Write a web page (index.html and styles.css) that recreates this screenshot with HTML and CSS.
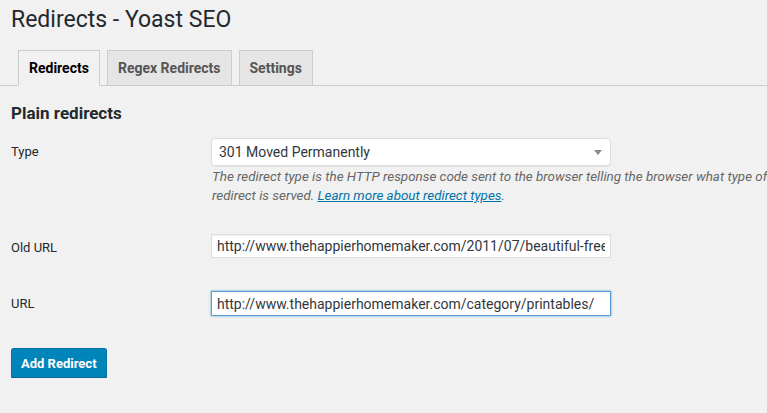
FILE: index.html
```html
<!DOCTYPE html>
<html lang="en">
<head>
  <meta charset="UTF-8" />
  <title>Redirects - Yoast SEO</title>
  <link rel="stylesheet" href="styles.css">
</head>
<body>
  <div class="wrap">
    <h1>Redirects - Yoast SEO</h1>

    <nav class="nav-tabs">
      <a class="nav-tab active" href="#">Redirects</a>
      <a class="nav-tab" href="#">Regex Redirects</a>
      <a class="nav-tab" href="#">Settings</a>
    </nav>

    <h2>Plain redirects</h2>

    <form class="form-table">
      <label class="row-label row-type" for="type">Type</label>
      <div class="field">
        <div class="select">
          <span>301 Moved Permanently</span>
          <svg class="select-arrow" width="8" height="5" viewBox="0 0 8 5"><path d="M0 0h8L4 5z" fill="#888"/></svg>
        </div>
        <p class="description">The redirect type is the HTTP response code sent to the browser telling the browser what type of redirect is served. <a href="#">Learn more about redirect types</a>.</p>
      </div>

      <label class="row-label row-old" for="old-url">Old URL</label>
      <div class="field field-old">
        <input id="old-url" type="text" value="http://www.thehappierhomemaker.com/2011/07/beautiful-free-printables/" />
      </div>

      <label class="row-label row-url" for="new-url">URL</label>
      <div class="field field-url">
        <input id="new-url" class="focused" type="text" value="http://www.thehappierhomemaker.com/category/printables/" />
      </div>
    </form>

    <button class="button-primary">Add Redirect</button>
  </div>

  <script>
    const urlInput = document.getElementById('new-url');
    urlInput.focus();
    urlInput.setSelectionRange(urlInput.value.length, urlInput.value.length);
  </script>
</body>
</html>
```

FILE: styles.css
```css
body {
  margin: 0;
  background: #f1f1f1;
  color: #23282d;
  font-family: Roboto, 'Liberation Sans', sans-serif;
  font-size: 13px;
  overflow: hidden;
}

.wrap {
  padding: 0 0 0 11px;
}

h1 {
  font-size: 23px;
  font-weight: 400;
  line-height: 29px;
  margin: 0;
  padding: 5px 0 0 0;
}

.nav-tabs {
  display: flex;
  gap: 7px;
  margin: 16px 0 0 -11px;
  padding-left: 18px;
  border-bottom: 1px solid #ccc;
  height: 35px;
}

.nav-tab {
  display: block;
  box-sizing: border-box;
  height: 36px;
  padding: 0 10px;
  line-height: 34px;
  font-size: 14px;
  font-weight: 700;
  color: #555;
  text-decoration: none;
  background: #e5e5e5;
  border: 1px solid #ccc;
}

.nav-tab.active {
  background: #f1f1f1;
  color: #000;
  border-bottom-color: #f1f1f1;
}

h2 {
  font-size: 17px;
  font-weight: 700;
  margin: 16px 0 0 0;
  line-height: 22px;
}

.form-table {
  display: grid;
  grid-template-columns: 200px 400px;
  margin-top: 14px;
}

.row-label {
  font-size: 13px;
  line-height: 18px;
  color: #23282d;
}

.row-type {
  padding-top: 5px;
}

.select {
  box-sizing: border-box;
  height: 28px;
  display: flex;
  align-items: center;
  justify-content: space-between;
  padding: 0 8px 0 7px;
  background: #fff;
  border: 1px solid #ddd;
  border-radius: 4px;
  box-shadow: 0 1px 1px rgba(0, 0, 0, 0.05);
  font-size: 14px;
  color: #32373c;
}

.description {
  width: 560px;
  margin: 1px 0 0 1px;
  font-style: italic;
  font-size: 13.4px;
  line-height: 19px;
  color: #666;
}

.description a {
  color: #0073aa;
}

.row-old {
  padding-top: 34px;
}

.field-old {
  padding-top: 29px;
}

.row-url {
  padding-top: 37px;
}

.field-url {
  padding-top: 33px;
}

input[type="text"] {
  display: block;
  box-sizing: border-box;
  width: 400px;
  height: 24px;
  margin: 0;
  padding: 0 5px;
  font-family: Roboto, 'Liberation Sans', sans-serif;
  font-size: 14px;
  color: #32373c;
  background: #fff;
  border: 1px solid #ddd;
  box-shadow: inset 0 1px 2px rgba(0, 0, 0, 0.07);
  outline: none;
}

input.focused {
  height: 25px;
  border-color: #5b9dd9;
  box-shadow: 0 0 2px rgba(30, 140, 190, 0.8);
}

.button-primary {
  display: block;
  margin-top: 32px;
  height: 30px;
  padding: 0 9px;
  font-family: Roboto, 'Liberation Sans', sans-serif;
  font-size: 13px;
  font-weight: 700;
  color: #fff;
  background: #0085ba;
  border: 1px solid #0073aa;
  border-bottom-color: #006799;
  border-radius: 3px;
  box-shadow: 0 1px 0 #006799;
  cursor: pointer;
}
```
